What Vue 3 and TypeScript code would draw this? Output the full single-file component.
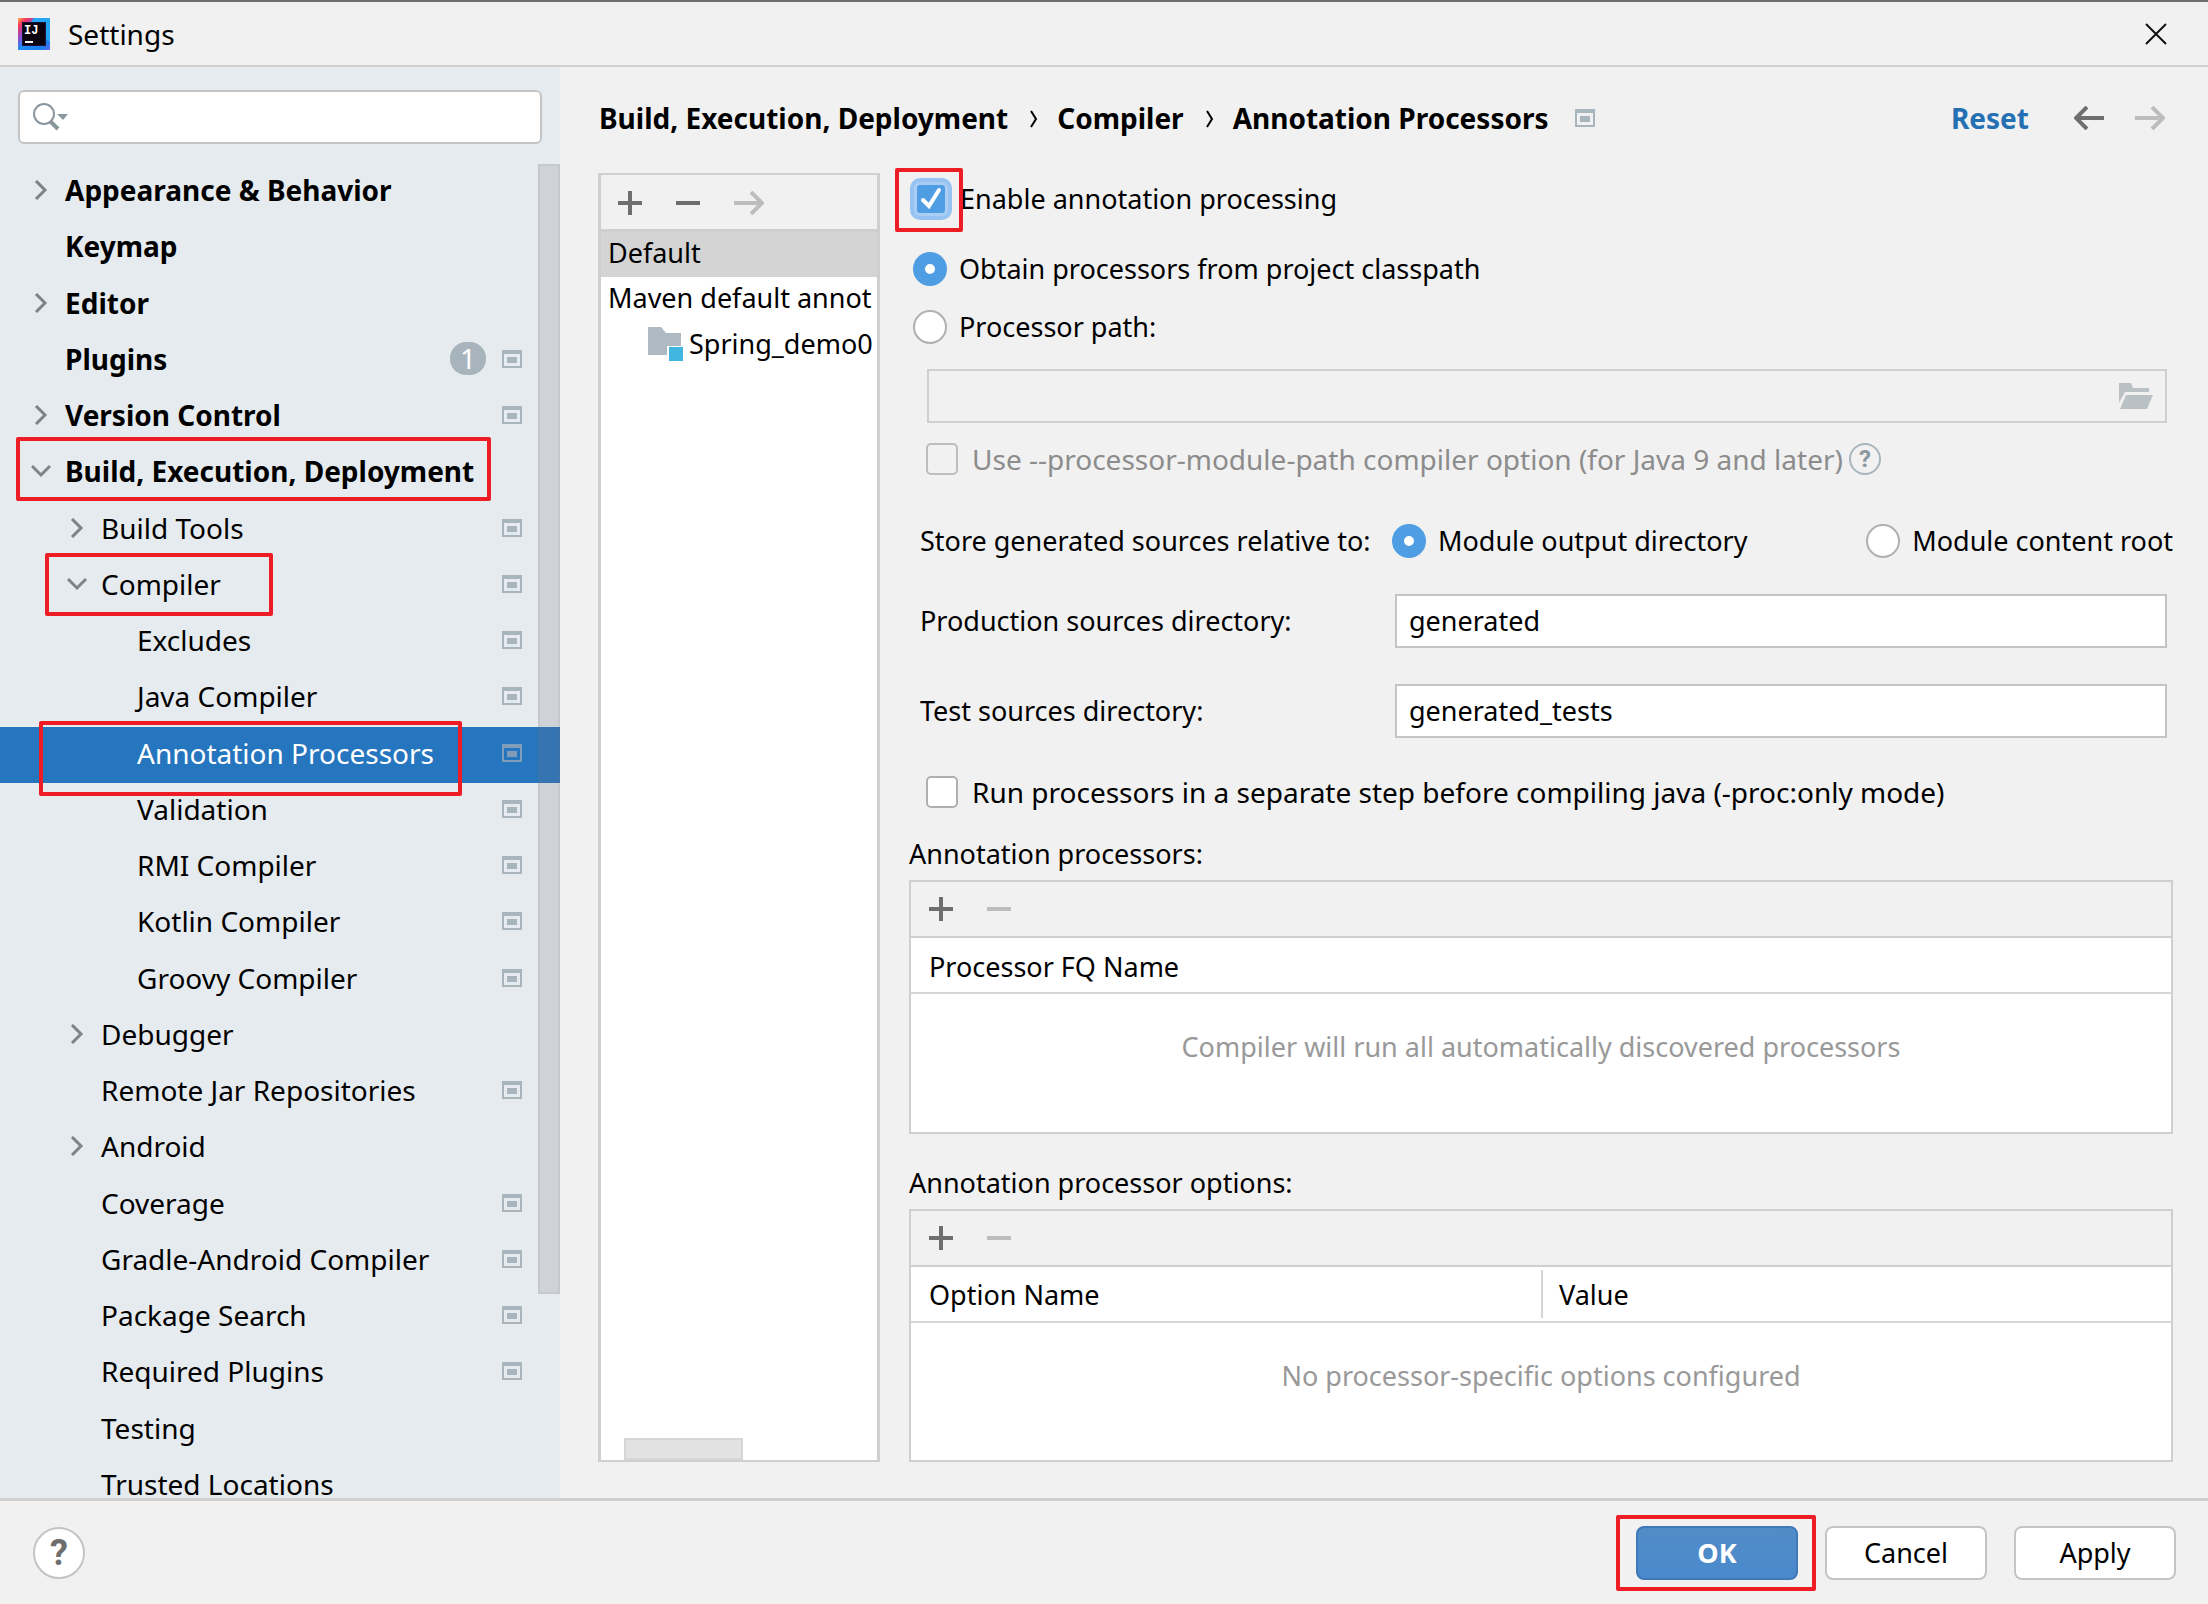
<script setup lang="ts">
import { ref } from 'vue'

interface Mark {
  left: number
  top: number
  width: number
  height: number
}

interface TreeItem {
  label: string
  depth: number
  arrow?: 'right' | 'down'
  scoped?: boolean
  badge?: string
  mark?: Mark
}

const items: TreeItem[] = [
  { label: 'Appearance & Behavior', depth: 0, arrow: 'right' },
  { label: 'Keymap', depth: 0 },
  { label: 'Editor', depth: 0, arrow: 'right' },
  { label: 'Plugins', depth: 0, scoped: true, badge: '1' },
  { label: 'Version Control', depth: 0, arrow: 'right', scoped: true },
  {
    label: 'Build, Execution, Deployment',
    depth: 0,
    arrow: 'down',
    mark: { left: 16, top: -8, width: 475, height: 64 },
  },
  { label: 'Build Tools', depth: 1, arrow: 'right', scoped: true },
  {
    label: 'Compiler',
    depth: 1,
    arrow: 'down',
    scoped: true,
    mark: { left: 45, top: -5, width: 228, height: 63 },
  },
  { label: 'Excludes', depth: 2, scoped: true },
  { label: 'Java Compiler', depth: 2, scoped: true },
  {
    label: 'Annotation Processors',
    depth: 2,
    scoped: true,
    mark: { left: 39, top: -6, width: 423, height: 75 },
  },
  { label: 'Validation', depth: 2, scoped: true },
  { label: 'RMI Compiler', depth: 2, scoped: true },
  { label: 'Kotlin Compiler', depth: 2, scoped: true },
  { label: 'Groovy Compiler', depth: 2, scoped: true },
  { label: 'Debugger', depth: 1, arrow: 'right' },
  { label: 'Remote Jar Repositories', depth: 1, scoped: true },
  { label: 'Android', depth: 1, arrow: 'right' },
  { label: 'Coverage', depth: 1, scoped: true },
  { label: 'Gradle-Android Compiler', depth: 1, scoped: true },
  { label: 'Package Search', depth: 1, scoped: true },
  { label: 'Required Plugins', depth: 1, scoped: true },
  { label: 'Testing', depth: 1 },
  { label: 'Trusted Locations', depth: 1 },
]

const selected = ref('Annotation Processors')
const query = ref('')
const enabled = ref(true)
const source = ref('classpath')
const processorPath = ref('')
const modulePath = ref(false)
const relativeTo = ref('output')
const productionDir = ref('generated')
const testDir = ref('generated_tests')
const separateStep = ref(false)

const markStyle = (m: Mark) => ({
  left: `${m.left}px`,
  top: `${m.top}px`,
  width: `${m.width}px`,
  height: `${m.height}px`,
})
</script>

<template>
  <div class="dialog">
    <header class="titlebar">
      <svg class="logo" viewBox="0 0 32 32" aria-hidden="true">
        <defs>
          <linearGradient id="ij" x1="0" y1="0" x2="1" y2="1">
            <stop offset="0" stop-color="#fdb04a" />
            <stop offset="0.14" stop-color="#f8355f" />
            <stop offset="0.34" stop-color="#8a4fd0" />
            <stop offset="0.5" stop-color="#1e8cf5" />
            <stop offset="0.85" stop-color="#1c7df0" />
            <stop offset="1" stop-color="#6b63f0" />
          </linearGradient>
        </defs>
        <rect width="32" height="32" fill="url(#ij)" />
        <path d="M16 0H32V24L27 20V5H12Z" fill="#22a5f7" />
        <rect x="4" y="4" width="24" height="24" fill="#1d1140" />
        <rect x="5" y="5" width="22" height="22" fill="#0b0210" />
        <text x="6" y="16" font-family="Liberation Mono, monospace" font-weight="700" font-size="12" fill="#fff">IJ</text>
        <rect x="7" y="23" width="8" height="2" fill="#fff" />
      </svg>
      <h1 class="title">Settings</h1>
      <button class="close" type="button" aria-label="Close">
        <svg viewBox="0 0 22 22" width="22" height="22"><path d="M1 1L21 21M21 1L1 21" fill="none" stroke="#111" stroke-width="2" /></svg>
      </button>
    </header>

    <div class="body">
      <aside class="sidebar">
        <div class="search">
          <svg width="38" height="30" viewBox="0 0 38 30" aria-hidden="true">
            <circle cx="12" cy="12" r="10" fill="none" stroke="#8b979e" stroke-width="2" />
            <path d="M18 19L26 27" stroke="#8b979e" stroke-width="4" />
            <path d="M25 12H36L31 18Z" fill="#8b979e" />
          </svg>
          <input v-model="query" type="text" aria-label="Search settings" />
        </div>
        <nav class="tree" aria-label="Settings categories">
          <div class="rows">
            <div v-for="item in items" :key="item.label" class="row" :class="{ selected: item.label === selected }">
              <button class="node" type="button" :class="`depth-${item.depth}`" @click="selected = item.label">
                <span class="chevron">
                  <svg v-if="item.arrow === 'right'" width="20" height="20" viewBox="0 0 20 20"><path d="M5 1L14 10L5 19" fill="none" stroke="#7f8386" stroke-width="3" /></svg>
                  <svg v-else-if="item.arrow === 'down'" width="20" height="20" viewBox="0 0 20 20"><path d="M1 5L10 14L19 5" fill="none" stroke="#7f8386" stroke-width="3" /></svg>
                </span>
                <span class="name">{{ item.label }}</span>
                <span v-if="item.badge" class="badge">{{ item.badge }}</span>
                <svg v-if="item.scoped" class="scope" viewBox="0 0 20 18"><path d="M0 0H20V18H0ZM2 4V16H18V4ZM5 7H15V13H5Z" fill-rule="evenodd" /></svg>
              </button>
              <span v-if="item.mark" class="mark" :style="markStyle(item.mark)"></span>
            </div>
          </div>
          <div class="scrollbar"></div>
        </nav>
      </aside>

      <main class="content">
        <div class="crumbs">
          <span>Build, Execution, Deployment</span>
          <svg class="sep" width="10" height="18" viewBox="0 0 10 18"><path d="M2 1L7 9L2 17" fill="none" stroke="#000" stroke-width="2" /></svg>
          <span>Compiler</span>
          <svg class="sep" width="10" height="18" viewBox="0 0 10 18"><path d="M2 1L7 9L2 17" fill="none" stroke="#000" stroke-width="2" /></svg>
          <span>Annotation Processors</span>
          <svg class="scope crumb-scope" viewBox="0 0 20 18"><path d="M0 0H20V18H0ZM2 4V16H18V4ZM5 7H15V13H5Z" fill-rule="evenodd" /></svg>
          <a class="reset" href="#">Reset</a>
          <button class="icon" type="button" aria-label="Back">
            <svg width="30" height="24" viewBox="0 0 30 24"><path d="M30 12H3M13 1L2 12L13 23" fill="none" stroke="#6e6e6e" stroke-width="4" /></svg>
          </button>
          <button class="icon" type="button" aria-label="Forward" disabled>
            <svg width="30" height="24" viewBox="0 0 30 24"><path d="M0 12H27M17 1L28 12L17 23" fill="none" stroke="#bdbdbd" stroke-width="4" /></svg>
          </button>
        </div>

        <div class="columns">
          <section class="profiles" aria-label="Profiles">
            <div class="profile-tools">
              <button class="icon" type="button" aria-label="Add profile">
                <svg width="24" height="24" viewBox="0 0 24 24"><path d="M12 0V24M0 12H24" stroke="#6e6e6e" stroke-width="4" /></svg>
              </button>
              <button class="icon" type="button" aria-label="Remove profile">
                <svg width="24" height="24" viewBox="0 0 24 24"><path d="M0 12H24" stroke="#6e6e6e" stroke-width="4" /></svg>
              </button>
              <button class="icon" type="button" aria-label="Move to" disabled>
                <svg width="30" height="24" viewBox="0 0 30 24"><path d="M0 12H27M17 1L28 12L17 23" fill="none" stroke="#bdbdbd" stroke-width="4" /></svg>
              </button>
            </div>
            <ul class="profile-list">
              <li class="current">Default</li>
              <li>Maven default annot</li>
              <li class="module">
                <svg width="35" height="34" viewBox="0 0 35 34"><path d="M0 0H13L18 6H33V19H19V28H0Z" fill="#afb9c1" /><path d="M21 20H35V34H21Z" fill="#40b6e0" /></svg>
                <span>Spring_demo0</span>
              </li>
            </ul>
            <div class="hscroll"></div>
          </section>

          <form class="form" @submit.prevent>
            <div class="line enable">
              <input id="enable" v-model="enabled" class="check focused" type="checkbox" />
              <span class="mark enable-mark"></span>
              <label for="enable">Enable annotation processing</label>
            </div>
            <div class="line radio-line">
              <input id="classpath" v-model="source" class="radio" type="radio" name="source" value="classpath" />
              <label for="classpath">Obtain processors from project classpath</label>
            </div>
            <div class="line radio-line">
              <input id="path" v-model="source" class="radio" type="radio" name="source" value="path" />
              <label for="path">Processor path:</label>
            </div>
            <div class="path-box">
              <input v-model="processorPath" type="text" aria-label="Processor path" disabled />
              <svg width="34" height="26" viewBox="0 0 34 26"><path d="M0 0H12L14 5H30V9H6L0 20Z" fill="#bac1c5" /><path d="M7 12H34L28 26H1Z" fill="#bac1c5" /></svg>
            </div>
            <div class="line check-line disabled">
              <input id="module-path" v-model="modulePath" class="check" type="checkbox" disabled />
              <label for="module-path">Use --processor-module-path compiler option (for Java 9 and later)</label>
              <button class="hint" type="button" aria-label="About this option">?</button>
            </div>

            <div class="store">
              <span class="store-label">Store generated sources relative to:</span>
              <input id="output" v-model="relativeTo" class="radio" type="radio" name="relative" value="output" />
              <label for="output">Module output directory</label>
              <input id="root" v-model="relativeTo" class="radio last" type="radio" name="relative" value="root" />
              <label for="root">Module content root</label>
            </div>
            <div class="field">
              <label for="production">Production sources directory:</label>
              <input id="production" v-model="productionDir" type="text" />
            </div>
            <div class="field">
              <label for="tests">Test sources directory:</label>
              <input id="tests" v-model="testDir" type="text" />
            </div>
            <div class="line check-line separate">
              <input id="separate" v-model="separateStep" class="check" type="checkbox" />
              <label for="separate">Run processors in a separate step before compiling java (-proc:only mode)</label>
            </div>

            <h2 class="caption">Annotation processors:</h2>
            <section class="panel">
              <div class="panel-tools">
                <button class="icon" type="button" aria-label="Add processor">
                  <svg width="24" height="24" viewBox="0 0 24 24"><path d="M12 0V24M0 12H24" stroke="#6e6e6e" stroke-width="4" /></svg>
                </button>
                <button class="icon" type="button" aria-label="Remove processor" disabled>
                  <svg width="24" height="24" viewBox="0 0 24 24"><path d="M0 12H24" stroke="#bdbdbd" stroke-width="4" /></svg>
                </button>
              </div>
              <table>
                <thead><tr><th>Processor FQ Name</th></tr></thead>
              </table>
              <p class="empty">Compiler will run all automatically discovered processors</p>
            </section>

            <h2 class="caption second">Annotation processor options:</h2>
            <section class="panel">
              <div class="panel-tools">
                <button class="icon" type="button" aria-label="Add option">
                  <svg width="24" height="24" viewBox="0 0 24 24"><path d="M12 0V24M0 12H24" stroke="#6e6e6e" stroke-width="4" /></svg>
                </button>
                <button class="icon" type="button" aria-label="Remove option" disabled>
                  <svg width="24" height="24" viewBox="0 0 24 24"><path d="M0 12H24" stroke="#bdbdbd" stroke-width="4" /></svg>
                </button>
              </div>
              <table>
                <thead><tr><th>Option Name</th><th class="split">Value</th></tr></thead>
              </table>
              <p class="empty">No processor-specific options configured</p>
            </section>
          </form>
        </div>
      </main>
    </div>

    <footer class="footer">
      <button class="help" type="button" aria-label="Help">?</button>
      <div class="actions">
        <div class="ok-wrap">
          <button class="btn primary" type="button">OK</button>
          <span class="mark ok-mark"></span>
        </div>
        <button class="btn" type="button">Cancel</button>
        <button class="btn" type="button">Apply</button>
      </div>
    </footer>
  </div>
</template>

<style>
body {
  margin: 0;
  background: #f1f1f1;
}
</style>

<style scoped>
* {
  box-sizing: border-box;
}
.dialog {
  display: flex;
  flex-direction: column;
  height: 100vh;
  background: #f1f1f1;
  border-top: 2px solid #6e6e6e;
  color: #000;
  font-family: "Noto Sans", "Open Sans", sans-serif;
  font-size: 27px;
  line-height: 36px;
}
button,
input {
  font: inherit;
  color: inherit;
  margin: 0;
}
button {
  padding: 0;
  border: 0;
  background: none;
}
svg {
  display: block;
  flex: none;
}
.titlebar {
  display: flex;
  align-items: center;
  height: 65px;
  padding: 0 41px 0 18px;
  border-bottom: 2px solid #cfcfcf;
  flex: none;
}
.logo {
  width: 32px;
  height: 32px;
}
.title {
  margin: 0 auto 0 18px;
  font-size: 28px;
  font-weight: 400;
}
.body {
  display: flex;
  flex: 1;
  min-height: 0;
}
.sidebar {
  display: flex;
  flex-direction: column;
  flex: none;
  width: 560px;
  background: #e6ebef;
  font-size: 28px;
}
.search {
  display: flex;
  align-items: center;
  height: 54px;
  margin: 23px 18px 20px;
  padding: 0 12px;
  background: #fff;
  border: 2px solid #c4c4c4;
  border-radius: 6px;
  flex: none;
}
.search input {
  flex: 1;
  min-width: 0;
  border: 0;
  outline: 0;
  background: none;
}
.tree {
  position: relative;
  flex: 1;
  min-height: 0;
  overflow: hidden;
}
.rows {
  display: grid;
  grid-auto-rows: 1fr;
  height: 1350px;
}
.row {
  position: relative;
}
.node {
  display: flex;
  align-items: center;
  width: 100%;
  height: 100%;
  padding: 0 38px 4px 31px;
  text-align: left;
}
.depth-0 {
  font-weight: 700;
}
.depth-1 {
  padding-left: 67px;
}
.depth-2 {
  padding-left: 103px;
}
.chevron {
  flex: none;
  width: 34px;
}
.name {
  flex: 1;
  white-space: nowrap;
}
.badge {
  width: 36px;
  height: 33px;
  margin-right: 16px;
  border-radius: 16px;
  background: #a8b4bc;
  color: #fff;
  font-weight: 400;
  line-height: 33px;
  text-align: center;
}
.scope {
  width: 20px;
  height: 18px;
  fill: #a9b5bc;
}
.selected {
  background: #2675bf;
  color: #fff;
}
.selected .scope {
  fill: #7f9db8;
}
.scrollbar {
  position: absolute;
  top: 0;
  right: 0;
  width: 22px;
  height: 1130px;
  background: rgba(115, 115, 125, 0.2);
  border: 2px solid rgba(115, 115, 115, 0.1);
}
.mark {
  position: absolute;
  z-index: 2;
  border: 4px solid #ee1c25;
  border-radius: 2px;
  pointer-events: none;
}
.content {
  display: flex;
  flex-direction: column;
  flex: 1;
  min-width: 0;
  padding: 0 35px 36px 38px;
}
.crumbs {
  display: flex;
  align-items: center;
  height: 106px;
  padding: 0 8px 4px 1px;
  font-size: 28px;
  font-weight: 700;
  white-space: nowrap;
  flex: none;
}
.sep {
  margin: 2px 18px 0 21px;
}
.crumb-scope {
  margin: 0 auto 0 26px;
}
.reset {
  color: #2470b3;
  text-decoration: none;
  margin-right: 14px;
}
.crumbs .icon {
  margin-left: 31px;
}
.columns {
  display: flex;
  flex: 1;
  min-height: 0;
  gap: 29px;
}
.profiles {
  display: flex;
  flex-direction: column;
  flex: none;
  width: 282px;
  background: #fff;
  border: solid #cfcfcf;
  border-width: 2px 3px;
}
.profile-tools {
  display: flex;
  align-items: center;
  gap: 34px;
  height: 57px;
  padding: 2px 0 0 17px;
  background: #f1f1f1;
  border-bottom: 3px solid #cfcfcf;
  flex: none;
}
.profile-list {
  flex: 1;
  margin: 0;
  padding: 0;
  list-style: none;
}
.profile-list li {
  height: 45px;
  padding-left: 7px;
  line-height: 42px;
  white-space: nowrap;
}
.profile-list .current {
  background: #d4d4d4;
}
.profile-list .module {
  display: flex;
  align-items: center;
  gap: 6px;
  padding: 0 0 2px 47px;
}
.hscroll {
  width: 119px;
  height: 22px;
  margin-left: 23px;
  background: #e2e2e2;
  border: 2px solid #d6d6d6;
}
.form {
  display: flex;
  flex-direction: column;
  flex: 1;
  min-width: 0;
}
.line,
.store {
  position: relative;
  display: flex;
  align-items: center;
  white-space: nowrap;
  flex: none;
}
.enable {
  height: 52px;
  margin-bottom: 15px;
  padding-left: 5px;
}
.enable label {
  margin-left: 12px;
}
.enable-mark {
  left: -14px;
  top: -5px;
  width: 68px;
  height: 64px;
}
.radio-line {
  height: 58px;
  padding-left: 4px;
}
.radio {
  appearance: none;
  flex: none;
  width: 34px;
  height: 34px;
  margin-right: 12px;
  border: 2px solid #b0b0b0;
  border-radius: 50%;
  background: #fff;
}
.radio:checked {
  border: 12px solid #4f9ee3;
}
.check {
  appearance: none;
  flex: none;
  width: 32px;
  height: 32px;
  border: 2px solid #b0b0b0;
  border-radius: 5px;
  background: #fff;
}
.check:disabled {
  background: #f1f1f1;
  border-color: #bdbdbd;
}
.check:checked {
  width: 34px;
  height: 34px;
  border: 3px solid #a9cdf5;
  border-radius: 6px;
  background: #4f9ee3 url("data:image/svg+xml,%3Csvg xmlns='http://www.w3.org/2000/svg' viewBox='0 0 28 28'%3E%3Cpath d='M6 15L12 21L22 5' fill='none' stroke='white' stroke-width='4' stroke-linecap='round'/%3E%3C/svg%3E") center / 28px 28px no-repeat;
}
.focused {
  box-shadow: 0 0 0 4px #97c3f3;
}
.path-box {
  display: flex;
  align-items: center;
  height: 54px;
  margin: 13px 6px 0 18px;
  padding-right: 12px;
  border: 2px solid #cfcfcf;
  flex: none;
}
.path-box input {
  flex: 1;
  min-width: 0;
  border: 0;
  background: none;
}
.check-line {
  height: 72px;
  padding-left: 17px;
  font-size: 28px;
}
.check-line label {
  margin-left: 14px;
}
.disabled {
  color: #8c8c8c;
}
.hint {
  width: 32px;
  height: 32px;
  margin-left: 6px;
  border: 2px solid #a9b5bc;
  border-radius: 50%;
  color: #8b979e;
  font: 700 24px/28px Roboto, sans-serif;
}
.store {
  height: 52px;
  margin: 20px 0 27px;
  padding-left: 11px;
}
.store-label {
  width: 472px;
}
.store .last {
  margin-left: auto;
}
.field {
  display: flex;
  align-items: center;
  margin: 0 6px 36px 11px;
  flex: none;
}
.field label {
  width: 475px;
  flex: none;
}
.field input {
  flex: 1;
  min-width: 0;
  height: 54px;
  padding: 0 12px 2px;
  border: 2px solid #c4c4c4;
  background: #fff;
}
.separate {
  height: 52px;
  margin-top: -8px;
}
.caption {
  margin: 18px 0 8px;
  font-size: 27px;
  font-weight: 400;
  line-height: 36px;
  flex: none;
}
.second {
  margin-top: 31px;
}
.panel {
  display: flex;
  flex-direction: column;
  flex: 1;
  border: 2px solid #cfcfcf;
  background: #fff;
}
.panel-tools {
  display: flex;
  align-items: center;
  gap: 34px;
  height: 56px;
  padding-left: 18px;
  background: #f1f1f1;
  border-bottom: 2px solid #cfcfcf;
  flex: none;
}
table {
  width: 100%;
  border-collapse: collapse;
  table-layout: fixed;
  border-bottom: 2px solid #d6d6d6;
}
th {
  height: 55px;
  padding: 3px 0 0 18px;
  font-weight: 400;
  text-align: left;
}
.split {
  background: linear-gradient(#d6d6d6, #d6d6d6) left center / 2px 48px no-repeat;
}
.empty {
  margin: 35px 0 0;
  color: #999;
  text-align: center;
}
.footer {
  display: flex;
  align-items: center;
  justify-content: space-between;
  height: 106px;
  padding: 0 32px 0 33px;
  border-top: 3px solid #cfcfcf;
  flex: none;
}
.help {
  width: 52px;
  height: 52px;
  border: 2px solid #c4c4c4;
  border-radius: 50%;
  background: #fff;
  color: #6e6e6e;
  font: 700 36px/48px Roboto, sans-serif;
}
.actions {
  display: flex;
  gap: 27px;
}
.ok-wrap {
  position: relative;
}
.btn {
  width: 162px;
  height: 54px;
  border: 2px solid #c4c4c4;
  border-radius: 8px;
  background: #fff;
}
.primary {
  background: linear-gradient(#528cc7, #4989cc);
  border-color: #3f79ba;
  color: #fff;
  font-weight: 700;
}
.ok-mark {
  left: -20px;
  top: -11px;
  width: 200px;
  height: 76px;
}
</style>
